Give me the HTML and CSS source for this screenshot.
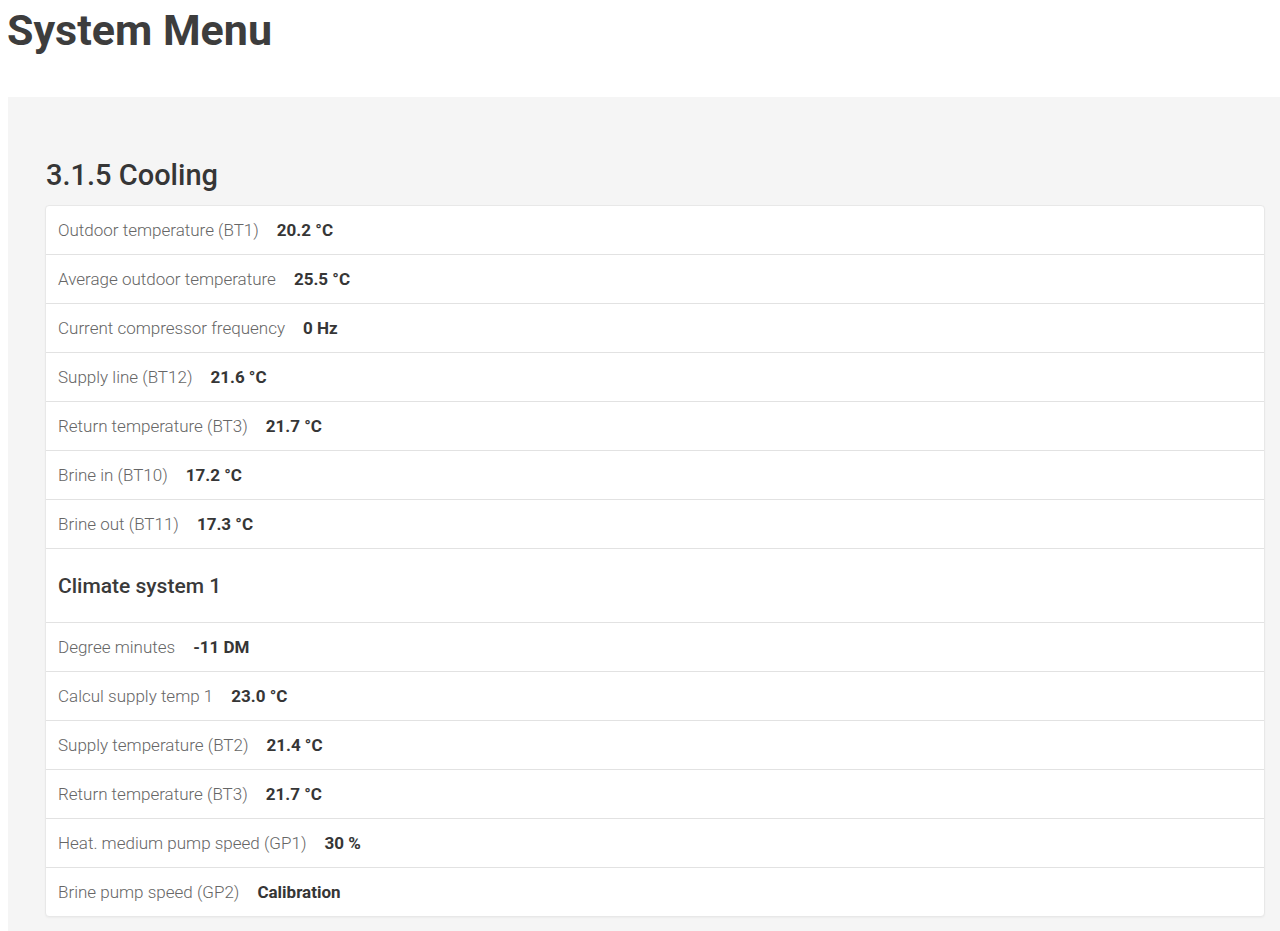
FILE: index.html
```html
<!DOCTYPE html>
<html lang="en">
<head>
<meta charset="utf-8">
<title>System Menu</title>
<link rel="stylesheet" href="styles.css">
</head>
<body>
<h1 class="page-title">System Menu</h1>
<section class="panel">
  <h2 class="menu-title">3.1.5 Cooling</h2>
  <div class="card">
    <div class="row"><span class="label">Outdoor temperature (BT1)</span><span class="value">20.2 °C</span></div>
    <div class="row"><span class="label">Average outdoor temperature</span><span class="value">25.5 °C</span></div>
    <div class="row"><span class="label">Current compressor frequency</span><span class="value">0 Hz</span></div>
    <div class="row"><span class="label">Supply line (BT12)</span><span class="value">21.6 °C</span></div>
    <div class="row"><span class="label">Return temperature (BT3)</span><span class="value">21.7 °C</span></div>
    <div class="row"><span class="label">Brine in (BT10)</span><span class="value">17.2 °C</span></div>
    <div class="row"><span class="label">Brine out (BT11)</span><span class="value">17.3 °C</span></div>
    <div class="row section-row"><h3 class="section-title">Climate system 1</h3></div>
    <div class="row"><span class="label">Degree minutes</span><span class="value">-11 DM</span></div>
    <div class="row"><span class="label">Calcul supply temp 1</span><span class="value">23.0 °C</span></div>
    <div class="row"><span class="label">Supply temperature (BT2)</span><span class="value">21.4 °C</span></div>
    <div class="row"><span class="label">Return temperature (BT3)</span><span class="value">21.7 °C</span></div>
    <div class="row"><span class="label">Heat. medium pump speed (GP1)</span><span class="value">30 %</span></div>
    <div class="row"><span class="label">Brine pump speed (GP2)</span><span class="value">Calibration</span></div>
  </div>
</section>
</body>
</html>
```

FILE: styles.css
```css
html, body {
  margin: 0;
  padding: 0;
  background: #ffffff;
  font-family: Roboto, "Liberation Sans", Arial, sans-serif;
  color: #333333;
}

.page-title {
  margin: 0 0 41px 0;
  padding: 4px 0 0 7px;
  font-size: 43px;
  line-height: 52px;
  font-weight: 700;
  color: #3d3d3d;
}

.panel {
  margin-left: 8px;
  background: #f5f5f5;
  padding: 24px 15px 40px 37px;
}

.menu-title {
  margin: 37px 0 13px 1px;
  font-size: 29px;
  line-height: 34px;
  font-weight: 500;
  color: #363636;
}

.card {
  background: #ffffff;
  border: 1px solid #e8e8e8;
  border-radius: 4px;
  box-shadow: 0 1px 2px rgba(0, 0, 0, 0.04);
}

.row {
  display: flex;
  align-items: center;
  gap: 18px;
  height: 48px;
  padding: 0 12px;
  border-bottom: 1px solid #e2e2e2;
  font-size: 17px;
}

.row:last-child {
  border-bottom: none;
}

.label {
  font-weight: 300;
  color: #666666;
}

.value {
  font-weight: 700;
  color: #363636;
}

.section-row {
  height: 73px;
}

.section-title {
  margin: 0;
  font-size: 21px;
  font-weight: 500;
  color: #3a3a3a;
}
```
